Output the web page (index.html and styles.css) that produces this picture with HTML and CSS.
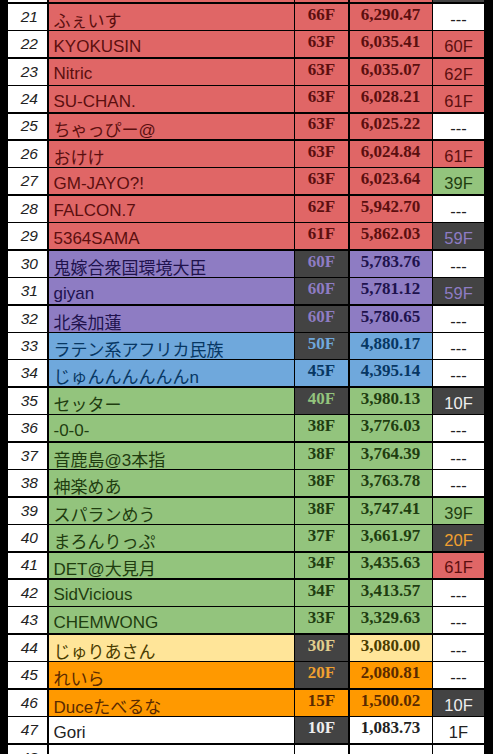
FILE: index.html
```html
<!doctype html>
<html>
<head>
    <title>ranking</title>
    <meta charset="utf-8">
    <link rel="stylesheet" href="styles.css">
</head>
<body>
<div class="sheet">
    <div class="row red"><div class="num"></div><div class="name"></div><div class="fl"></div><div class="sc"></div><div class="last dk"></div></div>
    <div class="row red"><div class="num">21</div><div class="name">ふぇいす</div><div class="fl">66F</div><div class="sc">6,290.47</div><div class="last">---</div></div>
    <div class="row red"><div class="num">22</div><div class="name">KYOKUSIN</div><div class="fl">63F</div><div class="sc">6,035.41</div><div class="last c-red">60F</div></div>
    <div class="row red"><div class="num">23</div><div class="name">Nitric</div><div class="fl">63F</div><div class="sc">6,035.07</div><div class="last c-red">62F</div></div>
    <div class="row red"><div class="num">24</div><div class="name">SU-CHAN.</div><div class="fl">63F</div><div class="sc">6,028.21</div><div class="last c-red">61F</div></div>
    <div class="row red"><div class="num">25</div><div class="name">ちゃっぴー@</div><div class="fl">63F</div><div class="sc">6,025.22</div><div class="last">---</div></div>
    <div class="row red"><div class="num">26</div><div class="name">おけけ</div><div class="fl">63F</div><div class="sc">6,024.84</div><div class="last c-red">61F</div></div>
    <div class="row red"><div class="num">27</div><div class="name">GM-JAYO?!</div><div class="fl">63F</div><div class="sc">6,023.64</div><div class="last c-green">39F</div></div>
    <div class="row red"><div class="num">28</div><div class="name">FALCON.7</div><div class="fl">62F</div><div class="sc">5,942.70</div><div class="last">---</div></div>
    <div class="row red"><div class="num">29</div><div class="name">5364SAMA</div><div class="fl">61F</div><div class="sc">5,862.03</div><div class="last dk t-purple">59F</div></div>
    <div class="row purple"><div class="num">30</div><div class="name">鬼嫁合衆国環境大臣</div><div class="fl dk t-purple">60F</div><div class="sc">5,783.76</div><div class="last">---</div></div>
    <div class="row purple"><div class="num">31</div><div class="name">giyan</div><div class="fl dk t-purple">60F</div><div class="sc">5,781.12</div><div class="last dk t-purple">59F</div></div>
    <div class="row purple"><div class="num">32</div><div class="name">北条加蓮</div><div class="fl dk t-purple">60F</div><div class="sc">5,780.65</div><div class="last">---</div></div>
    <div class="row blue"><div class="num">33</div><div class="name">ラテン系アフリカ民族</div><div class="fl dk t-blue">50F</div><div class="sc">4,880.17</div><div class="last">---</div></div>
    <div class="row blue"><div class="num">34</div><div class="name">じゅんんんんんんn</div><div class="fl">45F</div><div class="sc">4,395.14</div><div class="last">---</div></div>
    <div class="row green"><div class="num">35</div><div class="name">セッター</div><div class="fl dk t-green">40F</div><div class="sc">3,980.13</div><div class="last dk t-white">10F</div></div>
    <div class="row green"><div class="num">36</div><div class="name">-0-0-</div><div class="fl">38F</div><div class="sc">3,776.03</div><div class="last">---</div></div>
    <div class="row green"><div class="num">37</div><div class="name">音鹿島@3本指</div><div class="fl">38F</div><div class="sc">3,764.39</div><div class="last">---</div></div>
    <div class="row green"><div class="num">38</div><div class="name">神楽めあ</div><div class="fl">38F</div><div class="sc">3,763.78</div><div class="last">---</div></div>
    <div class="row green"><div class="num">39</div><div class="name">スパランめう</div><div class="fl">38F</div><div class="sc">3,747.41</div><div class="last c-green">39F</div></div>
    <div class="row green"><div class="num">40</div><div class="name">まろんりっぷ</div><div class="fl">37F</div><div class="sc">3,661.97</div><div class="last dk t-orange">20F</div></div>
    <div class="row green"><div class="num">41</div><div class="name">DET@大見月</div><div class="fl">34F</div><div class="sc">3,435.63</div><div class="last c-red">61F</div></div>
    <div class="row green"><div class="num">42</div><div class="name">SidVicious</div><div class="fl">34F</div><div class="sc">3,413.57</div><div class="last">---</div></div>
    <div class="row green"><div class="num">43</div><div class="name">CHEMWONG</div><div class="fl">33F</div><div class="sc">3,329.63</div><div class="last">---</div></div>
    <div class="row yellow"><div class="num">44</div><div class="name">じゅりあさん</div><div class="fl dk t-yellow">30F</div><div class="sc">3,080.00</div><div class="last">---</div></div>
    <div class="row orange"><div class="num">45</div><div class="name">れいら</div><div class="fl dk t-orange">20F</div><div class="sc">2,080.81</div><div class="last">---</div></div>
    <div class="row orange"><div class="num">46</div><div class="name">Duceたべるな</div><div class="fl">15F</div><div class="sc">1,500.02</div><div class="last dk t-white">10F</div></div>
    <div class="row white"><div class="num">47</div><div class="name">Gori</div><div class="fl dk t-white">10F</div><div class="sc">1,083.73</div><div class="last">1F</div></div>
    <div class="row white"><div class="num">48</div><div class="name"></div><div class="fl"></div><div class="sc"></div><div class="last"></div></div>
</div>
</body>
</html>
```

FILE: styles.css
```css
body        { margin:0; background:#000; overflow:hidden; height:754px; }
.sheet      { display:grid; grid-template-columns:39px 245px 53px 82px 51px; grid-auto-rows:25.94px; gap:1.5px;
              margin:-23.7px 0 0 8px; width:max-content; background:#000; }
.row        { display:contents; }
.row > div  { display:flex; align-items:center; white-space:nowrap; overflow:hidden; box-sizing:border-box; }

.num        { background:#fff; color:#222; justify-content:flex-end; padding:0 9px 0 0;
              font:italic 15.5px "Liberation Sans", Arial, sans-serif; }
.name       { padding:5px 0 0 5px; font:17px "Liberation Sans", Arial, "Noto Sans CJK JP", sans-serif; }
.fl, .sc    { justify-content:center; padding-bottom:4px; font:bold 17px "Liberation Serif", "Times New Roman", serif; }
.last       { justify-content:center; padding-top:5px; background:#fff; color:#222;
              font:16.5px "Liberation Sans", Arial, sans-serif; }

/* row colours */
.red > div    { background:#e06666; color:#5b0f0f; }
.purple > div { background:#8e7cc3; color:#20124d; }
.blue > div   { background:#6fa8dc; color:#073763; }
.green > div  { background:#93c47d; color:#1f3d10; }
.yellow > div { background:#ffe599; color:#4a3c00; }
.orange > div { background:#ff9900; color:#5a2a00; }
.white > div  { background:#fff; color:#222; }
.row > .num   { background:#fff; color:#222; }
.row > .last  { background:#fff; color:#222; }

/* highlighted cells */
.row > .c-red   { background:#e06666; color:#5b0f0f; }
.row > .c-green { background:#93c47d; color:#1f3d10; }
.row > .dk      { background:#434343; }
.row > .t-purple { color:#8e7cc3; }
.row > .t-blue   { color:#6fa8dc; }
.row > .t-green  { color:#93c47d; }
.row > .t-yellow { color:#e2cf8e; }
.row > .t-orange { color:#f0a030; }
.row > .t-white  { color:#eee; }
```
